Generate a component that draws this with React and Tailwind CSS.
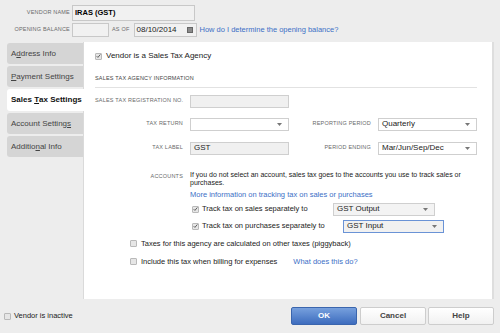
import React from "react";

function Check({ checked }) {
  return (
    <span className="inline-flex w-[7px] h-[7px] shrink-0 items-center justify-center border border-[#b9b9b9] bg-[#e6e6e6] rounded-[1px]">
      {checked && (
        <svg width="6" height="6" viewBox="0 0 6 6">
          <path d="M0.8 3.2 L2.3 4.7 L5.2 1.2" fill="none" stroke="#444" strokeWidth="1" />
        </svg>
      )}
    </span>
  );
}

function Arrow() {
  return (
    <svg width="5" height="3" viewBox="0 0 5 3" className="shrink-0">
      <path d="M0 0 L5 0 L2.5 3 Z" fill="#777" />
    </svg>
  );
}

function Select({ value, w, blue, gray }) {
  return (
    <div
      className={
        "flex items-center justify-between h-[13px] pl-[3px] pr-[6px] border text-[8px] text-[#222] " +
        w +
        " " +
        (blue ? "border-[#6a93d6] bg-[#f1f1f1]" : gray ? "border-[#cfcfcf] bg-[#f3f3f3]" : "border-[#cfcfcf] bg-white")
      }
    >
      <span className="leading-none">{value}</span>
      <Arrow />
    </div>
  );
}

function Label({ children, w }) {
  return (
    <div className={"text-right whitespace-nowrap text-[5.5px] tracking-[0.2px] text-[#6a6a6a] leading-none " + w}>{children}</div>
  );
}

function Tab({ children, selected }) {
  return (
    <div
      className={
        "flex items-center whitespace-pre pl-[4px] rounded-l-[3px] text-[8px] leading-none " +
        (selected
          ? "h-[22px] bg-white font-bold text-[#111] relative z-10 -mr-px"
          : "h-[21px] bg-[#d5d5d5] text-[#444]")
      }
    >
      {children}
    </div>
  );
}

export default function App() {
  return (
    <div className="w-[500px] h-[333px] bg-[#ededed] overflow-hidden font-['Liberation_Sans',Arial,sans-serif] text-[#333]">
      {/* header */}
      <div className="pt-[5px]">
        <div className="flex items-center h-[16px]">
          <Label w="w-[70px]">VENDOR NAME</Label>
          <div className="ml-[2px] w-[123px] h-[16px] border border-[#c8c8c8] bg-[#f1f1f1] px-[2px] flex items-center text-[7.5px] font-bold text-black">
            IRAS (GST)
          </div>
        </div>
        <div className="flex items-center h-[14px] mt-[2px]">
          <Label w="w-[70px]">OPENING BALANCE</Label>
          <div className="ml-[2px] w-[37px] h-[14px] border border-[#c8c8c8] bg-[#f1f1f1]" />
          <div className="ml-[3px] text-[5.5px] tracking-[0.2px] text-[#6a6a6a] leading-none">AS OF</div>
          <div className="ml-[4px] w-[63px] h-[14px] border border-[#c8c8c8] bg-[#f1f1f1] flex items-center justify-between pl-[2px] pr-[3px] text-[8px] text-[#222]">
            <span className="leading-none">08/10/2014</span>
            <span className="w-[6px] h-[6px] bg-[#8a8a8a] border border-[#666]" />
          </div>
          <a className="ml-[3px] text-[7.5px] text-[#3c6fc6] leading-none">How do I determine the opening balance?</a>
        </div>
      </div>

      {/* main */}
      <div className="flex mt-[5px]">
        <div className="ml-[7px] w-[76px] flex flex-col gap-[2px] pt-[1px]">
          <Tab>
            {"A"}<span className="underline">d</span>{"dress Info"}
          </Tab>
          <Tab>
            <span className="underline">P</span>{"ayment Settings"}
          </Tab>
          <Tab selected>
            {"Sales "}<span className="underline">T</span>{"ax Settings"}
          </Tab>
          <Tab>
            {"Account Setting"}<span className="underline">s</span>
          </Tab>
          <Tab>
            {"Additio"}<span className="underline">n</span>{"al Info"}
          </Tab>
        </div>

        <div className="w-[411px] h-[257px] bg-white border-l border-l-[#dadada] border-r-2 border-r-[#dedede] pl-[11px]">
          <div className="flex items-center h-[10px] mt-[9px] gap-[4px]">
            <Check checked />
            <span className="text-[8px] text-[#222] leading-none">Vendor is a Sales Tax Agency</span>
          </div>

          <div className="mt-[15px] mr-[15px] pb-[5px] border-b border-[#e2e2e2] text-[5.5px] tracking-[0.2px] text-[#444] leading-none">
            SALES TAX AGENCY INFORMATION
          </div>

          <div className="flex items-center mt-[7px]">
            <Label w="w-[88px]">SALES TAX REGISTRATION NO.</Label>
            <div className="ml-[7px] w-[99px] h-[13px] border border-[#cfcfcf] bg-[#f0f0f0]" />
          </div>

          <div className="flex items-center mt-[10px]">
            <Label w="w-[88px]">TAX RETURN</Label>
            <div className="ml-[7px]">
              <Select value="" w="w-[99px]" />
            </div>
            <Label w="w-[82px]">REPORTING PERIOD</Label>
            <div className="ml-[7px]">
              <Select value="Quarterly" w="w-[99px]" />
            </div>
          </div>

          <div className="flex items-center mt-[11px]">
            <Label w="w-[88px]">TAX LABEL</Label>
            <div className="ml-[7px] w-[99px] h-[13px] border border-[#cfcfcf] bg-[#f0f0f0] flex items-center pl-[3px] text-[8px] text-[#222] leading-none">
              GST
            </div>
            <Label w="w-[82px]">PERIOD ENDING</Label>
            <div className="ml-[7px]">
              <Select value="Mar/Jun/Sep/Dec" w="w-[99px]" />
            </div>
          </div>

          <div className="flex mt-[16px]">
            <div className="w-[88px] text-right text-[5.5px] tracking-[0.2px] text-[#6a6a6a] leading-[8.5px] pt-[1px]">
              ACCOUNTS
            </div>
            <div className="ml-[7px] w-[290px]">
              <p className="text-[7px] leading-[8.5px] text-[#222]">
                If you do not select an account, sales tax goes to the accounts you use to track sales or purchases.
              </p>
              <a className="block mt-[2px] text-[7.5px] leading-[10px] text-[#3c6fc6]">
                More information on tracking tax on sales or purchases
              </a>
              <div className="flex items-center mt-[3px] pl-[2px]">
                <Check checked />
                <span className="ml-[3px] w-[131px] text-[7.5px] text-[#222] leading-none">Track tax on sales separately to</span>
                <Select value="GST Output" w="w-[102px]" gray />
              </div>
              <div className="flex items-center mt-[4px] pl-[2px]">
                <Check checked />
                <span className="ml-[3px] w-[141px] text-[7.5px] text-[#222] leading-none">Track tax on purchases separately to</span>
                <Select value="GST Input" w="w-[101px]" blue />
              </div>
            </div>
          </div>

          <div className="flex items-center h-[10px] mt-[6px] ml-[35px] gap-[4px]">
            <Check />
            <span className="text-[7.5px] text-[#222] leading-none">Taxes for this agency are calculated on other taxes (piggyback)</span>
          </div>
          <div className="flex items-center h-[10px] mt-[8px] ml-[35px] gap-[4px]">
            <Check />
            <span className="text-[7.5px] text-[#222] leading-none">Include this tax when billing for expenses</span>
            <a className="ml-[12px] text-[7.5px] text-[#3c6fc6] leading-none">What does this do?</a>
          </div>
        </div>
      </div>

      {/* footer */}
      <div className="flex items-center h-[18px] mt-[8px]">
        <div className="flex items-center ml-[4px] gap-[3px]">
          <Check />
          <span className="text-[7.5px] text-[#222] leading-none">Vendor is inactive</span>
        </div>
        <div className="ml-auto mr-[6px] flex gap-[2px]">
          <button className="w-[66px] h-[18px] rounded-[2px] border border-[#3a65ad] bg-gradient-to-b from-[#77a0dd] to-[#3d6cbe] text-white text-[8px] font-bold">
            OK
          </button>
          <button className="ml-[1px] w-[66px] h-[18px] rounded-[2px] border border-[#cdcdcd] bg-gradient-to-b from-white to-[#f1f1f1] text-[#444] text-[8px] font-bold">
            Cancel
          </button>
          <button className="w-[66px] h-[18px] rounded-[2px] border border-[#cdcdcd] bg-gradient-to-b from-white to-[#f1f1f1] text-[#444] text-[8px] font-bold">
            Help
          </button>
        </div>
      </div>
    </div>
  );
}
